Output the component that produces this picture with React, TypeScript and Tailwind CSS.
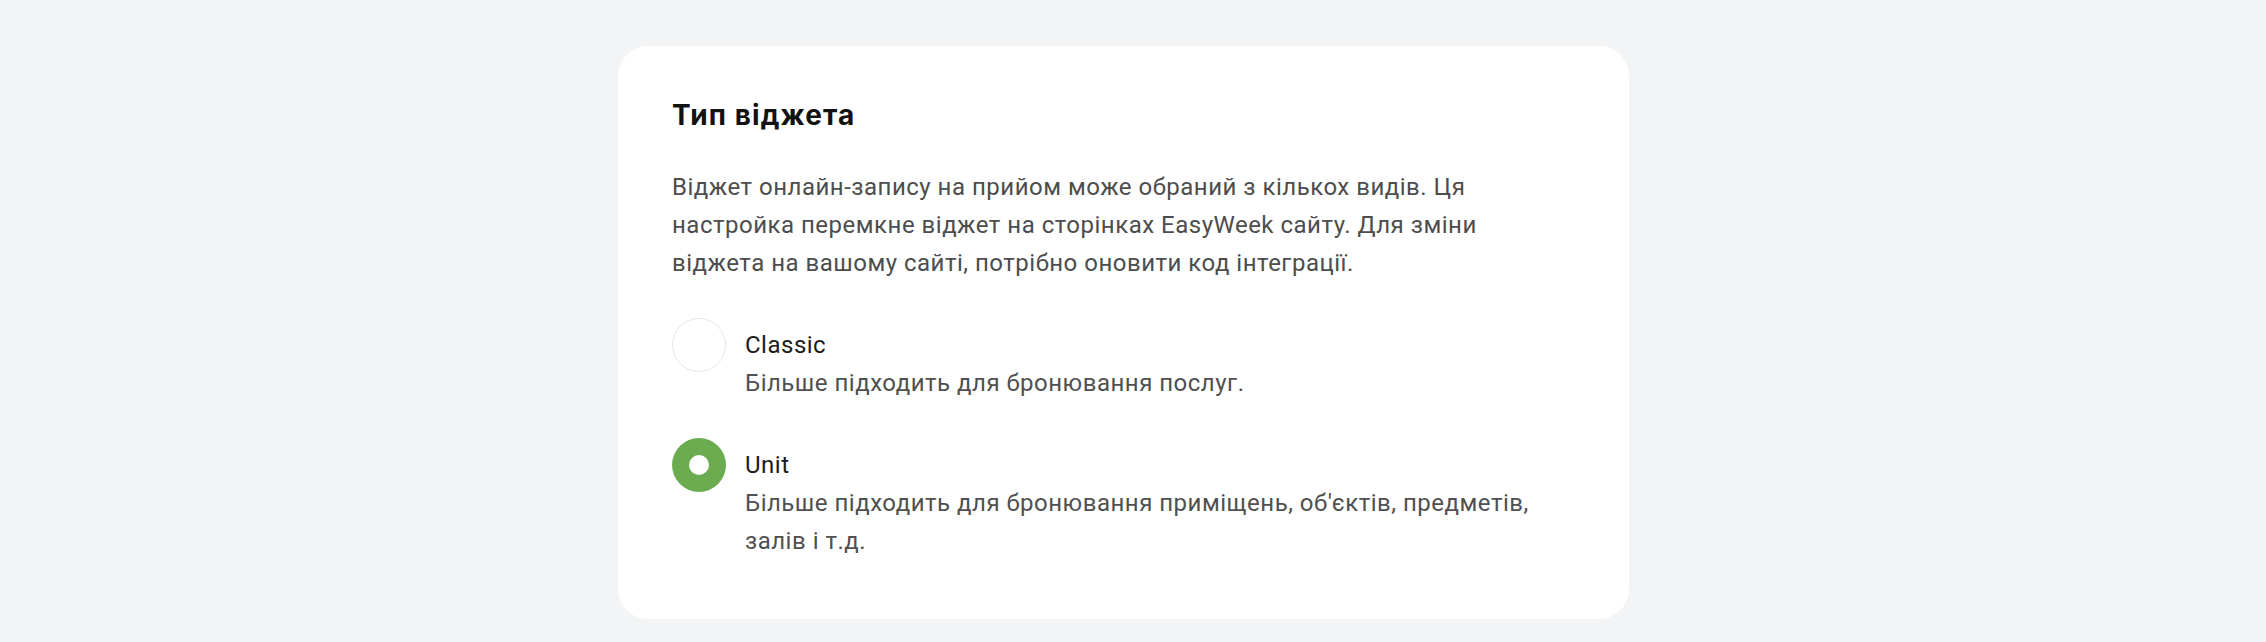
import React from "react";

function Radio({ checked }: { checked: boolean }) {
  if (checked) {
    return (
      <div className="w-[54px] h-[54px] shrink-0 rounded-full bg-[#6cac50] flex items-center justify-center -mt-[8px]">
        <div className="w-[20px] h-[20px] rounded-full bg-white" />
      </div>
    );
  }
  return (
    <div className="w-[54px] h-[54px] shrink-0 rounded-full bg-white border border-[#e6e6e6] -mt-[8px]" />
  );
}

function Option({
  checked,
  label,
  desc,
}: {
  checked: boolean;
  label: string;
  desc: string;
}) {
  return (
    <div className="flex items-start gap-[19px]">
      <Radio checked={checked} />
      <div className="flex flex-col tracking-[0.5px]">
        <div className="text-[24px] leading-[38px] text-[#1b1b1b]">{label}</div>
        <div className="text-[24px] leading-[38px] text-[#505050]">{desc}</div>
      </div>
    </div>
  );
}

export default function App() {
  return (
    <div
      className="w-full h-[642px] bg-[#f3f4f6] pt-[46px]"
      style={{ fontFamily: "Roboto, 'Noto Sans', sans-serif" }}
    >
      <div className="ml-[618px] w-[1011px] h-[573px] bg-white rounded-[30px] pt-[52px] px-[54px]">
        <h1
          className="text-[28px] leading-[34px] font-bold text-[#121212] tracking-[1.1px]"
          style={{ fontFamily: "Inter, 'Noto Sans', sans-serif" }}
        >
          Тип віджета
        </h1>
        <p className="mt-[36px] text-[24px] leading-[38px] text-[#4d4d4d] tracking-[0.5px]">
          Віджет онлайн-запису на прийом може обраний з кількох видів. Ця
          настройка перемкне віджет на сторінках EasyWeek сайту. Для зміни
          віджета на вашому сайті, потрібно оновити код інтеграції.
        </p>
        <div className="mt-[44px] flex flex-col gap-[44px]">
          <Option
            checked={false}
            label="Classic"
            desc="Більше підходить для бронювання послуг."
          />
          <Option
            checked={true}
            label="Unit"
            desc="Більше підходить для бронювання приміщень, об'єктів, предметів, залів і т.д."
          />
        </div>
      </div>
    </div>
  );
}
